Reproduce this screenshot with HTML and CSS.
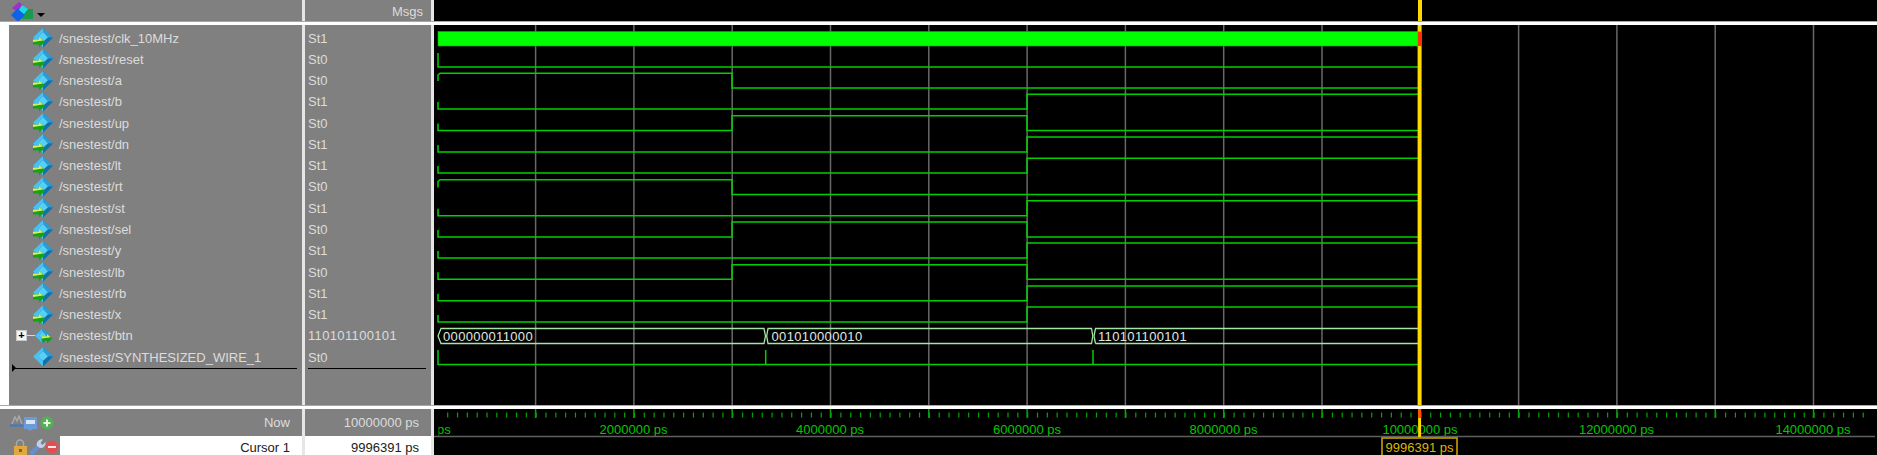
FILE: index.html
```html
<!DOCTYPE html>
<html lang="en">
<head>
<meta charset="utf-8">
<title>Wave</title>
<link rel="stylesheet" href="styles.css">
</head>
<body>
<svg class="defs" width="0" height="0" aria-hidden="true">
  <symbol id="diamond" viewBox="0 0 20 20">
    <polygon points="10,0 20,9.5 10,19.5 0,9.5" fill="#1c86c4"/>
    <polygon points="10,0 0,9.5 10,19.5 10,14 5,9.5 10,4" fill="#4cc0ee"/>
    <polygon points="10,0 20,9.5 15,9.5 10,4" fill="#2a9cd8"/>
    <polygon points="10,4 15,9.5 10,14 5,9.5" fill="#58d0f4"/>
    <polygon points="10,19.5 20,9.5 15,9.5 10,14" fill="#1470a8"/>
  </symbol>
  <symbol id="arrow" viewBox="0 0 12 11">
    <polygon points="0,2.5 6,2.5 6,0 12,5 6,10.5 6,7.5 0,7.5" fill="#18a018"/>
    <polygon points="0,2.5 6,2.5 6,0 10,3.6 0,5" fill="#d8f060"/>
  </symbol>
  <symbol id="sig" viewBox="0 0 20 20">
    <use href="#diamond" width="20" height="20"/>
    <use href="#arrow" x="0" y="9" width="12" height="11"/>
  </symbol>
  <clipPath id="ruler-clip">
    <rect x="438.5" y="409" width="1438.5" height="46"/>
  </clipPath>
</svg>
<div class="app">
  <div class="pane header">
    <div class="cell head-tools">
      <svg class="logo" viewBox="0 0 22 20" width="22" height="20">
        <rect x="11" y="7" width="11" height="10" fill="#1c9a4c"/>
        <polygon points="8,0 15,6 8,11 1,6" fill="#a030c8"/>
        <polygon points="7,6 14,13 7,20 0,13" fill="#1060e8"/>
        <polygon points="11,3 17,7 13,12 8,8" fill="#20d8e8"/>
      </svg>
      <span class="caret"></span>
    </div>
    <div class="cell head-msgs">Msgs</div>
    <div class="wave-head"><span class="cursor-top"></span></div>
  </div>
  <div class="strip"></div>
  <div class="pane main">
    <div class="cell names">
      <div class="row"><span class="tree"></span><svg class="ic"><use href="#sig"/></svg><span>/snestest/clk_10MHz</span></div>
      <div class="row"><span class="tree"></span><svg class="ic"><use href="#sig"/></svg><span>/snestest/reset</span></div>
      <div class="row"><span class="tree"></span><svg class="ic"><use href="#sig"/></svg><span>/snestest/a</span></div>
      <div class="row"><span class="tree"></span><svg class="ic"><use href="#sig"/></svg><span>/snestest/b</span></div>
      <div class="row"><span class="tree"></span><svg class="ic"><use href="#sig"/></svg><span>/snestest/up</span></div>
      <div class="row"><span class="tree"></span><svg class="ic"><use href="#sig"/></svg><span>/snestest/dn</span></div>
      <div class="row"><span class="tree"></span><svg class="ic"><use href="#sig"/></svg><span>/snestest/lt</span></div>
      <div class="row"><span class="tree"></span><svg class="ic"><use href="#sig"/></svg><span>/snestest/rt</span></div>
      <div class="row"><span class="tree"></span><svg class="ic"><use href="#sig"/></svg><span>/snestest/st</span></div>
      <div class="row"><span class="tree"></span><svg class="ic"><use href="#sig"/></svg><span>/snestest/sel</span></div>
      <div class="row"><span class="tree"></span><svg class="ic"><use href="#sig"/></svg><span>/snestest/y</span></div>
      <div class="row"><span class="tree"></span><svg class="ic"><use href="#sig"/></svg><span>/snestest/lb</span></div>
      <div class="row"><span class="tree"></span><svg class="ic"><use href="#sig"/></svg><span>/snestest/rb</span></div>
      <div class="row"><span class="tree"></span><svg class="ic"><use href="#sig"/></svg><span>/snestest/x</span></div>
      <div class="row"><span class="tree"><i class="plus">+</i><i class="branch"></i></span><svg class="ic"><use href="#diamond" x="2" width="15" height="20"/><use href="#arrow" x="8" y="8" width="12" height="10"/></svg><span>/snestest/btn</span></div>
      <div class="row"><span class="tree"></span><svg class="ic"><use href="#diamond"/></svg><span>/snestest/SYNTHESIZED_WIRE_1</span></div>
      <div class="divider name-div"></div>
    </div>
    <div class="cell values">
      <div class="row">St1</div>
      <div class="row">St0</div>
      <div class="row">St0</div>
      <div class="row">St1</div>
      <div class="row">St0</div>
      <div class="row">St1</div>
      <div class="row">St1</div>
      <div class="row">St0</div>
      <div class="row">St1</div>
      <div class="row">St0</div>
      <div class="row">St1</div>
      <div class="row">St0</div>
      <div class="row">St1</div>
      <div class="row">St1</div>
      <div class="row num">110101100101</div>
      <div class="row">St0</div>
      <div class="divider value-div"></div>
    </div>
    <svg class="wave" viewBox="434 25 1443 380" preserveAspectRatio="none">
      <line class="grid" x1="534.85" y1="215" x2="1877" y2="215"/>
      <rect class="clk" x="438" y="31.5" width="980" height="14.5"/>
      <path class="sigline" d="M438,53 V67 H1418"/>
      <path class="sigline" d="M438,81 V75 L440,73.3 H732 V88 H1418"/>
      <path class="sigline" d="M438,102 V109 H1027 V94.3 H1418"/>
      <path class="sigline" d="M438,123.5 V130.5 H732 V115.7 H1027 V130.5 H1418"/>
      <path class="sigline" d="M438,145 V152 H1027 V137 H1418"/>
      <path class="sigline" d="M438,166 V173 H1027 V158.3 H1418"/>
      <path class="sigline" d="M438,187.5 V181.5 L440,179.7 H732 V194.5 H1418"/>
      <path class="sigline" d="M438,208.7 V215.7 H1027 V200.7 H1418"/>
      <path class="sigline" d="M438,230 V237 H732 V222 H1027 V237 H1418"/>
      <path class="sigline" d="M438,251 V258 H1027 V243 H1418"/>
      <path class="sigline" d="M438,272.3 V279.3 H732 V264.7 H1027 V279.3 H1418"/>
      <path class="sigline" d="M438,293.7 V300.7 H1027 V286 H1418"/>
      <path class="sigline" d="M438,315 V322 H1027 V307 H1418"/>
      <path class="busline" d="M438,336 L441,328.5 H764 L765.5,336 L764,343.5 H441 Z"/>
      <path class="busline" d="M766.7,336 L768,328.5 H1091.5 L1092.8,336 L1091.5,343.5 H768 Z"/>
      <path class="busline" d="M1094,336 L1095.5,328.5 H1418 M1095.5,343.5 H1418 M1095.5,343.5 L1094,336"/>
      <text class="bustext" x="443" y="340.5">000000011000</text>
      <text class="bustext" x="771.5" y="340.5">001010000010</text>
      <text class="bustext" x="1098" y="340.5">110101100101</text>
      <path class="sigline" d="M438,350 V364.5 H1418 M765.7,350 V364.5 M1093,350 V364.5"/>
      <line class="cursor" x1="1419.6" y1="25" x2="1419.6" y2="405"/>
      <rect class="clk-end" x="1417.6" y="31.5" width="4.4" height="14.5"/>
    </svg>
  </div>
  <div class="strip"></div>
  <div class="pane footer">
    <div class="cell now-label">
      <svg class="tools" viewBox="0 0 46 18" width="46" height="18">
        <path d="M2,9 L5,2 L7,6 L9,1 L12,9" fill="none" stroke="#a8a8a8" stroke-width="1.5"/>
        <rect x="0" y="9.5" width="13" height="2" fill="#3c78c8"/>
        <rect x="14" y="2" width="13" height="12" fill="#6c9cd8"/>
        <rect x="16" y="5" width="9" height="4" fill="#d8e4f0"/>
        <polygon points="18,14 23,14 20,16" fill="#6c9cd8"/>
        <circle cx="37" cy="8" r="6.5" fill="#54b054"/>
        <path d="M37,4.5 V11.5 M33.5,8 H40.5" stroke="#e8f4e8" stroke-width="2"/>
      </svg>
      <span>Now</span>
    </div>
    <div class="cell now-value">10000000 ps</div>
    <svg class="ruler" viewBox="434 409 1443 46" preserveAspectRatio="none">
      <line class="minor" x1="447.1" y1="415" x2="1872" y2="415"/>
      <line class="major" x1="534.85" y1="413.5" x2="1877" y2="413.5"/>
      <text class="rtext clipped" x="437" y="433.5">ps</text>
      <text class="rtext mid" x="633.5" y="433.5">2000000 ps</text>
      <text class="rtext mid" x="830" y="433.5">4000000 ps</text>
      <text class="rtext mid" x="1027" y="433.5">6000000 ps</text>
      <text class="rtext mid" x="1223.5" y="433.5">8000000 ps</text>
      <text class="rtext mid" x="1420" y="433.5">10000000 ps</text>
      <text class="rtext mid" x="1616.5" y="433.5">12000000 ps</text>
      <text class="rtext mid" x="1813" y="433.5">14000000 ps</text>
      <line class="rbase" x1="434" y1="436.5" x2="1875" y2="436.5"/>
      <line class="rcursor" x1="1419.6" y1="409" x2="1419.6" y2="437"/>
      <line class="rcursor-top" x1="1419.6" y1="409" x2="1419.6" y2="418"/>
      <rect class="cbox" x="1382" y="438" width="75" height="19"/>
      <text class="ctext" x="1419.6" y="452">9996391 ps</text>
    </svg>
    <div class="cell cursor-label">
      <svg class="tools2" viewBox="0 0 46 16" width="46" height="16">
        <path d="M3.5,7 V4.5 A3.5,3.5 0 0 1 10.5,4.5 V7" fill="none" stroke="#a8a8a8" stroke-width="1.5"/>
        <rect x="1" y="7" width="13" height="9" fill="#e0a840"/>
        <rect x="6" y="10" width="3" height="3" fill="#906010"/>
        <path d="M18,15 L27,6" stroke="#6890d0" stroke-width="4"/>
        <path d="M24,7 A5,5 0 0 1 30,0.5 L27.5,4 L29.5,6 L32.5,3 A5,5 0 0 1 27,9 Z" fill="#c0d0e8"/>
        <circle cx="39" cy="8" r="6.5" fill="#e05050"/>
        <rect x="35" y="7" width="8" height="2" fill="#f4e8e8"/>
      </svg>
      <span class="cursor-name">Cursor 1</span>
    </div>
    <div class="cell cursor-value">9996391 ps</div>
  </div>
</div>
</body>
</html>
```
FILE: styles.css
```css
* { box-sizing: border-box; }
html, body { margin: 0; padding: 0; background: #000; }
.defs { position: absolute; }
.app {
  width: 1877px;
  height: 455px;
  overflow: hidden;
  display: flex;
  flex-direction: column;
  font-family: "Liberation Sans", Arial, sans-serif;
  font-size: 13px;
  color: #dcdcdc;
}
.pane {
  display: grid;
  grid-template-columns: 305px 129px 1fr;
}
.cell {
  background: #808080;
  border-right: 3px solid #e6e6e6;
}
.strip {
  height: 4px;
  background: #fff;
  border-top: 1px solid #a8a8a8;
  flex: none;
  position: relative;
}
.header { height: 21px; flex: none; }
.head-tools {
  display: flex;
  align-items: flex-start;
  padding: 2px 0 0 11px;
}
.caret {
  width: 0;
  height: 0;
  margin: 11px 0 0 4px;
  border-left: 4px solid transparent;
  border-right: 4px solid transparent;
  border-top: 4px solid #000;
}
.head-msgs {
  text-align: right;
  padding: 4px 8px 0 0;
  line-height: 15px;
}
.wave-head { background: #000; position: relative; }
.cursor-top {
  position: absolute;
  left: 983.6px;
  top: 0;
  width: 4px;
  height: 21px;
  background: #ffd800;
}
.main { height: 380px; flex: none; }
.names {
  border-left: 9px solid #fff;
  padding-top: 2.5px;
}
.values { padding-top: 2.5px; }
.row {
  height: 21.28px;
  display: flex;
  align-items: center;
  white-space: nowrap;
}
.values .row { padding-left: 3px; }
.values .num { letter-spacing: 0.35px; }
.tree {
  width: 24px;
  flex: none;
  display: flex;
  align-items: center;
  padding-left: 7px;
}
.plus {
  width: 11px;
  height: 11px;
  background: #f4f4f4;
  border: 1px solid #c8c8c8;
  color: #000;
  font: bold 11px/9px "Liberation Sans", sans-serif;
  text-align: center;
  flex: none;
}
.branch {
  width: 8px;
  height: 1px;
  background: #d8d8d8;
  flex: none;
}
.ic {
  width: 20px;
  height: 20px;
  margin-right: 6px;
  flex: none;
}
.divider {
  height: 1.5px;
  background: #000;
  margin: 0 3px;
  position: relative;
}
.name-div { margin: 0 5px 0 3px; }
.value-div { margin: 0 5px 0 3px; }
.name-div::before {
  content: "";
  position: absolute;
  left: 0;
  top: -4px;
  border-left: 4px solid #000;
  border-top: 4px solid transparent;
  border-bottom: 4px solid transparent;
}
.wave, .ruler { display: block; width: 100%; background: #000; }
.wave { height: 380px; }
.grid {
  stroke: #686868;
  stroke-width: 380;
  stroke-dasharray: 1.5 96.8;
}
.clk { fill: #00ff00; stroke: #00b000; stroke-width: 0.6; }
.clk-end { fill: #ff3000; }
.sigline { fill: none; stroke: #00d000; stroke-width: 1.5; }
.busline { fill: none; stroke: #a4e4a4; stroke-width: 1.3; }
.bustext {
  fill: #e0e8e0;
  letter-spacing: 0.35px;
  font: 13px "Liberation Sans", Arial, sans-serif;
}
.cursor { stroke: #ffd800; stroke-width: 4; }
.footer {
  height: 46px;
  flex: none;
  grid-template-rows: 27px 19px;
}
.now-label {
  display: flex;
  justify-content: space-between;
  padding: 6px 12px 0 10px;
  line-height: 16px;
}
.now-value {
  text-align: right;
  padding: 6px 12px 0 0;
  line-height: 16px;
}
.ruler {
  grid-column: 3;
  grid-row: 1 / 3;
  height: 46px;
}
.minor {
  stroke: #00a800;
  stroke-width: 5;
  stroke-dasharray: 1.2 8.63;
}
.major {
  stroke: #00a800;
  stroke-width: 9;
  stroke-dasharray: 1.5 96.8;
}
.rtext {
  fill: #00c800;
  font: 13px "Liberation Sans", Arial, sans-serif;
}
.clipped { clip-path: url(#ruler-clip); }
.mid { text-anchor: middle; }
.rbase { stroke: #606060; stroke-width: 1.5; }
.rcursor { stroke: #ffd800; stroke-width: 3; }
.rcursor-top { stroke: #ff5000; stroke-width: 3; }
.cbox { fill: #000; stroke: #c8a000; stroke-width: 1.6; }
.ctext {
  fill: #d8b800;
  text-anchor: middle;
  font: 13px "Liberation Sans", Arial, sans-serif;
}
.cursor-label {
  display: flex;
  padding-left: 13px;
  grid-row: 2;
  grid-column: 1;
}
.tools2 { margin: 3px 1px 0 0; flex: none; }
.cursor-name {
  flex: 1;
  background: #fff;
  color: #202020;
  text-align: right;
  padding: 3px 12px 0 0;
  line-height: 17px;
}
.cursor-value {
  grid-row: 2;
  grid-column: 2;
  background: #fff;
  color: #202020;
  text-align: right;
  padding: 3px 12px 0 0;
  line-height: 17px;
}
```
